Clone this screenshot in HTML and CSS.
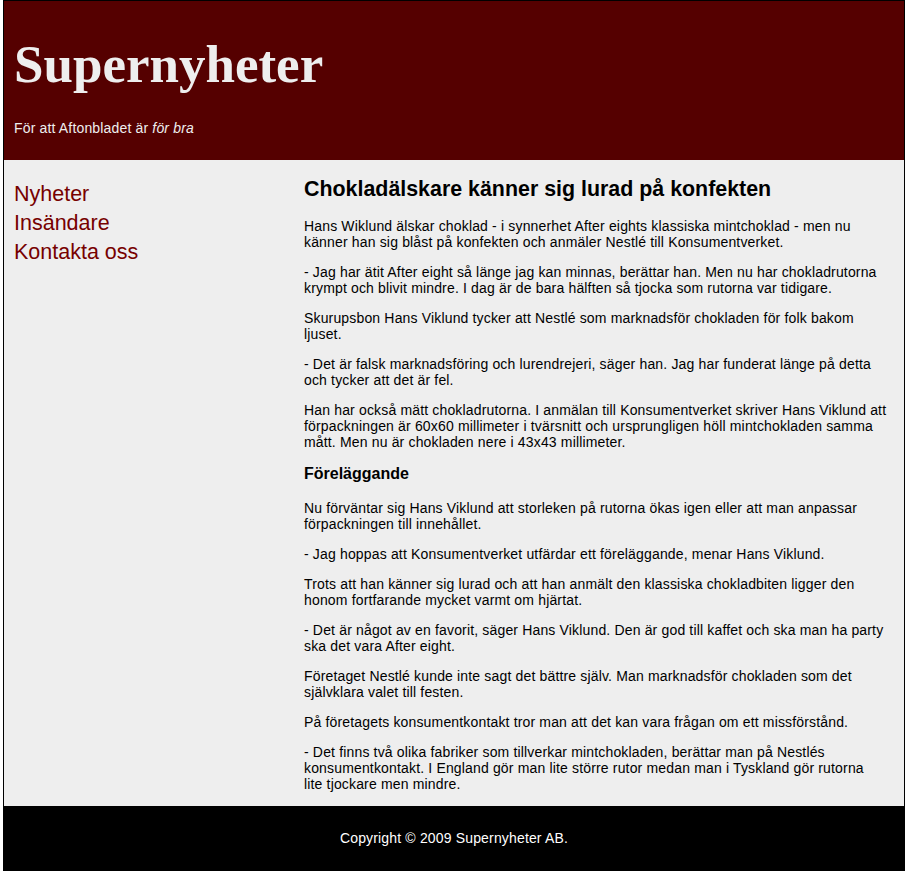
FILE: index.html
```html
<!DOCTYPE html>
<html lang="sv">
<head>
<meta charset="utf-8">
<title>Supernyheter</title>
<link rel="stylesheet" href="styles.css">
</head>
<body>
<div class="page">
  <header class="masthead">
    <h1 class="title">Supernyheter</h1>
    <p class="tagline">För att Aftonbladet är <em>för bra</em></p>
  </header>
  <div class="main">
    <nav class="sidebar">
      <a href="#">Nyheter</a>
      <a href="#">Insändare</a>
      <a href="#">Kontakta oss</a>
    </nav>
    <article class="content">
      <h2>Chokladälskare känner sig lurad på konfekten</h2>
      <p>Hans Wiklund älskar choklad - i synnerhet After eights klassiska mintchoklad - men nu känner han sig blåst på konfekten och anmäler Nestlé till Konsumentverket.</p>
      <p>- Jag har ätit After eight så länge jag kan minnas, berättar han. Men nu har chokladrutorna krympt och blivit mindre. I dag är de bara hälften så tjocka som rutorna var tidigare.</p>
      <p>Skurupsbon Hans Viklund tycker att Nestlé som marknadsför chokladen för folk bakom ljuset.</p>
      <p>- Det är falsk marknadsföring och lurendrejeri, säger han. Jag har funderat länge på detta och tycker att det är fel.</p>
      <p>Han har också mätt chokladrutorna. I anmälan till Konsumentverket skriver Hans Viklund att förpackningen är 60x60 millimeter i tvärsnitt och ursprungligen höll mintchokladen samma mått. Men nu är chokladen nere i 43x43 millimeter.</p>
      <h3>Föreläggande</h3>
      <p>Nu förväntar sig Hans Viklund att storleken på rutorna ökas igen eller att man anpassar förpackningen till innehållet.</p>
      <p>- Jag hoppas att Konsumentverket utfärdar ett föreläggande, menar Hans Viklund.</p>
      <p>Trots att han känner sig lurad och att han anmält den klassiska chokladbiten ligger den honom fortfarande mycket varmt om hjärtat.</p>
      <p>- Det är något av en favorit, säger Hans Viklund. Den är god till kaffet och ska man ha party ska det vara After eight.</p>
      <p>Företaget Nestlé kunde inte sagt det bättre själv. Man marknadsför chokladen som det självklara valet till festen.</p>
      <p>På företagets konsumentkontakt tror man att det kan vara frågan om ett missförstånd.</p>
      <p>- Det finns två olika fabriker som tillverkar mintchokladen, berättar man på Nestlés konsumentkontakt. I England gör man lite större rutor medan man i Tyskland gör rutorna lite&nbsp;tjockare men mindre.</p>
    </article>
  </div>
  <footer class="footer">Copyright © 2009 Supernyheter AB.</footer>
</div>
</body>
</html>
```
FILE: styles.css
```css
html, body {
  margin: 0;
  padding: 0;
  background: #fff;
}
body {
  font-family: "Liberation Sans", Arial, sans-serif;
  font-size: 14px;
  letter-spacing: 0.16px;
  color: #000;
}
.page {
  width: 900px;
  margin: 0 0 0 3px;
  border: 1px solid #000;
  background: #eee;
}
.masthead {
  background: #550000;
  height: 159px;
  box-sizing: border-box;
  padding: 35px 10px 0 10px;
  color: #eee;
}
.title {
  margin: 0;
  font-family: "Liberation Serif", Georgia, serif;
  font-weight: bold;
  font-size: 53px;
  line-height: 56px;
  letter-spacing: 0;
  color: #eee;
}
.tagline {
  margin: 28px 0 0 0;
  font-size: 14px;
  line-height: 16px;
}
.main {
  display: flex;
  background: #eee;
}
.sidebar {
  width: 290px;
  padding: 20px 0 0 10px;
  display: flex;
  flex-direction: column;
  flex: none;
}
.sidebar a {
  font-size: 21.5px;
  line-height: 29px;
  letter-spacing: 0;
  color: #770000;
  text-decoration: none;
}
.content {
  width: 584px;
  padding: 17px 0 0 0;
}
.content h2 {
  margin: 0 0 17px 0;
  font-size: 21.4px;
  line-height: 24px;
  letter-spacing: 0;
  font-weight: bold;
}
.content h3 {
  margin: 14px 0 17px 0;
  font-size: 16px;
  line-height: 19px;
  letter-spacing: 0;
  font-weight: bold;
}
.content p {
  margin: 0 0 14px 0;
  line-height: 16px;
}
.footer {
  background: #000;
  color: #fff;
  text-align: center;
  padding: 24px 0 24px 0;
  line-height: 16px;
  font-size: 14px;
}
```
